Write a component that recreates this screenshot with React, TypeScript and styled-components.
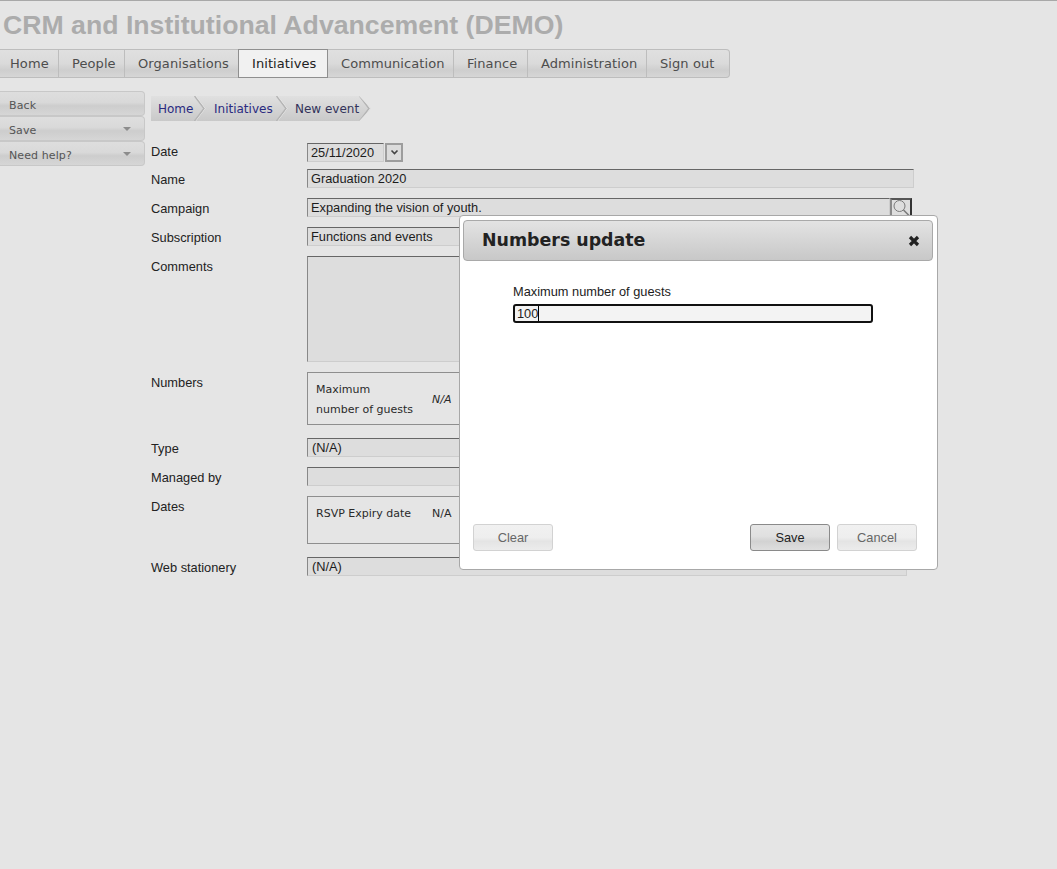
import React from 'react';
import styled, { createGlobalStyle } from 'styled-components';

const GlobalStyle = createGlobalStyle`
  html, body {
    margin: 0;
    padding: 0;
    background: #e5e5e5;
  }
  * {
    box-sizing: border-box;
  }
`;

const Page = styled.div`
  position: relative;
  min-height: 869px;
  border-top: 1px solid #a8a8a8;
  font-family: "Liberation Sans", Arial, sans-serif;
  overflow: hidden;
`;

const Title = styled.h1`
  margin: 0;
  height: 48px;
  padding: 9px 0 0 3px;
  font-size: 26.67px;
  line-height: 30px;
  font-weight: bold;
  color: #acacac;
`;

const NavBar = styled.nav`
  display: inline-flex;
  height: 29px;
  border: 1px solid #bdbdbd;
  border-left: none;
  border-radius: 0 4px 4px 0;
  background: linear-gradient(#e0e0e0 0%, #dadada 50%, #cecece 75%, #d6d6d6 100%);
  vertical-align: top;
`;

const NavItem = styled.a<{ $width: number; $pad?: number; $active?: boolean }>`
  display: flex;
  align-items: center;
  width: ${({ $width }) => $width}px;
  padding-left: ${({ $pad }) => $pad ?? 13}px;
  font-family: "DejaVu Sans", Verdana, sans-serif;
  font-size: 13px;
  letter-spacing: 0.08px;
  color: ${({ $active }) => ($active ? '#222' : '#4d4d4d')};
  border-right: 1px solid #bdbdbd;
  ${({ $active }) => $active && `
    background: #f1f1f1;
    border: 1px solid #8f8f8f;
    margin: -1px 0 -1px -1px;
    height: 29px;
  `}
  &:last-child {
    border-right: none;
  }
`;

const Content = styled.div`
  display: flex;
  margin-top: 13px;
`;

const Sidebar = styled.aside`
  display: flex;
  flex-direction: column;
  width: 145px;
  flex: none;
`;

const SideButton = styled.div`
  display: flex;
  align-items: center;
  justify-content: space-between;
  height: 25px;
  padding: 3px 13px 0 9px;
  border: 1px solid #c8c8c8;
  border-left: none;
  border-radius: 0 4px 4px 0;
  background: linear-gradient(#dedede 0%, #d9d9d9 45%, #cdcdcd 60%, #d6d6d6 100%);
  font-family: "DejaVu Sans", Verdana, sans-serif;
  font-size: 11px;
  color: #555;
  letter-spacing: 0.1px;
`;

const Caret = styled.span`
  width: 0;
  height: 0;
  margin-top: -3px;
  border-left: 4px solid transparent;
  border-right: 4px solid transparent;
  border-top: 4px solid #8c8c8c;
`;

const Main = styled.main`
  padding: 5px 0 0 6px;
  flex: 1;
`;

const Crumbs = styled.div`
  display: flex;
  width: 220px;
  height: 25px;
  margin-bottom: 22px;
  background: linear-gradient(#e0e0e0, #c9c9c9);
  clip-path: polygon(0 0, calc(100% - 12px) 0, 100% 50%, calc(100% - 12px) 100%, 0 100%);
`;

const Crumb = styled.a<{ $width: number; $pad: number; $current?: boolean }>`
  position: relative;
  display: flex;
  align-items: center;
  width: ${({ $width }) => $width}px;
  padding-left: ${({ $pad }) => $pad}px;
  font-family: "DejaVu Sans", Verdana, sans-serif;
  font-size: 12px;
  color: ${({ $current }) => ($current ? '#33335a' : '#2a2a80')};
`;

const CrumbEdge = styled.svg`
  position: absolute;
  top: 0;
  right: 0;
  width: 12px;
  height: 25px;
`;

const Row = styled.div<{ $gap?: number }>`
  display: flex;
  margin-top: ${({ $gap }) => $gap ?? 10}px;
`;

const Label = styled.label<{ $offset?: number }>`
  flex: none;
  width: 156px;
  padding-top: ${({ $offset }) => $offset ?? 3}px;
  font-size: 12.8px;
  line-height: 15px;
  color: #222;
`;

const Field = styled.div<{ $width: number; $height?: number; $pad?: number }>`
  width: ${({ $width }) => $width}px;
  height: ${({ $height }) => $height ?? 19}px;
  padding: 0 ${({ $pad }) => $pad ?? 3}px;
  background: #dddddd;
  border-top: 1px solid #666;
  border-left: 1px solid #888;
  border-bottom: 1px solid #cdcdcd;
  border-right: 1px solid #cdcdcd;
  font-size: 12.8px;
  line-height: 17px;
  color: #1c1c1c;
  white-space: nowrap;
`;

const DropButton = styled.div`
  display: flex;
  align-items: center;
  justify-content: center;
  width: 18px;
  height: 19px;
  margin-left: 1px;
  background: #dcdcdc;
  border: 2px solid #9d9d9d;
`;

const SearchButton = styled.div`
  display: flex;
  align-items: flex-start;
  justify-content: center;
  width: 22px;
  height: 19px;
  background: #dedede;
  border-top: 2px solid #555;
  border-left: 2px solid #8a8a8a;
  border-right: 2px solid #333;
`;

const InfoBox = styled.div<{ $height: number }>`
  display: flex;
  width: 599px;
  height: ${({ $height }) => $height}px;
  padding: 7px 8px;
  border: 1px solid #8e8e8e;
  font-family: "DejaVu Sans", Verdana, sans-serif;
  font-size: 11px;
  line-height: 20px;
  color: #2a2a2a;
`;

const InfoName = styled.div`
  width: 116px;
`;

const InfoValue = styled.div<{ $italic?: boolean; $top?: number }>`
  font-style: ${({ $italic }) => ($italic ? 'italic' : 'normal')};
  margin-top: ${({ $top }) => $top ?? 0}px;
`;

const Dialog = styled.section`
  position: absolute;
  left: 459px;
  top: 214px;
  display: flex;
  flex-direction: column;
  width: 479px;
  height: 355px;
  padding: 4px 4px 4px 3px;
  background: #fff;
  border: 1px solid #a8a8a8;
  border-radius: 4px;
`;

const DialogHeader = styled.header`
  display: flex;
  align-items: center;
  justify-content: space-between;
  height: 41px;
  padding: 0 12px 0 18px;
  background: linear-gradient(#e3e3e3, #c8c8c8);
  border: 1px solid #a9a9a9;
  border-radius: 4px;
`;

const DialogTitle = styled.h2`
  margin: 0 0 1px;
  font-family: "DejaVu Sans", Verdana, sans-serif;
  font-size: 17.4px;
  font-weight: bold;
  color: #222;
`;

const DialogBody = styled.div`
  flex: 1;
  padding: 23px 0 0 50px;
`;

const DialogLabel = styled.div`
  font-size: 12.8px;
  line-height: 16px;
  color: #1c1c1c;
  margin-bottom: 4px;
`;

const FocusedInput = styled.div`
  width: 360px;
  height: 19px;
  padding: 0 2px;
  background: #f3f3f3;
  border: 2px solid #111;
  border-radius: 3px;
  font-size: 12.8px;
  line-height: 15px;
  color: #222;
`;

const TextCaret = styled.span`
  border-right: 1px solid #000;
`;

const DialogFooter = styled.footer`
  display: flex;
  justify-content: space-between;
  padding: 0 16px 14px 10px;
`;

const FooterGroup = styled.div`
  display: flex;
  gap: 7px;
`;

const DialogButton = styled.button<{ $primary?: boolean }>`
  width: 80px;
  height: 27px;
  padding: 0;
  border-radius: 3px;
  border: 1px solid ${({ $primary }) => ($primary ? '#8a8a8a' : '#d2d2d2')};
  background: ${({ $primary }) => ($primary
    ? 'linear-gradient(#e6e6e6 0%, #e0e0e0 45%, #d2d2d2 65%, #dedede 100%)'
    : 'linear-gradient(#f1f1f1 0%, #eeeeee 50%, #e4e4e4 65%, #ececec 100%)')};
  font-family: "Liberation Sans", Arial, sans-serif;
  font-size: 12.8px;
  color: ${({ $primary }) => ($primary ? '#222' : '#666')};
`;

const crumbs = [
  { text: 'Home', width: 55, pad: 7 },
  { text: 'Initiatives', width: 82, pad: 8 },
  { text: 'New event', width: 83, pad: 7, current: true },
];

const navItems = [
  { text: 'Home', width: 59, pad: 10 },
  { text: 'People', width: 66 },
  { text: 'Organisations', width: 114 },
  { text: 'Initiatives', width: 90, active: true },
  { text: 'Communication', width: 126 },
  { text: 'Finance', width: 74 },
  { text: 'Administration', width: 119 },
  { text: 'Sign out', width: 82 },
];

export default function App() {
  return (
    <Page>
      <GlobalStyle />
      <Title>CRM and Institutional Advancement (DEMO)</Title>
      <NavBar>
        {navItems.map(item => (
          <NavItem key={item.text} $width={item.width} $pad={item.pad} $active={item.active}>{item.text}</NavItem>
        ))}
      </NavBar>
      <Content>
        <Sidebar>
          <SideButton>Back</SideButton>
          <SideButton>Save<Caret /></SideButton>
          <SideButton>Need help?<Caret /></SideButton>
        </Sidebar>
        <Main>
          <Crumbs>
            {crumbs.map(c => (
              <Crumb key={c.text} $width={c.width} $pad={c.pad} $current={c.current}>
                {c.text}
                <CrumbEdge viewBox="0 0 12 25">
                  <path d="M1.5 0 L11 12.5 L1.5 25" fill="none" stroke="#ececec" strokeWidth="1" />
                  <path d="M0.5 0 L10 12.5 L0.5 25" fill="none" stroke="#b4b4b4" strokeWidth="1.4" />
                </CrumbEdge>
              </Crumb>
            ))}
          </Crumbs>
          <Row $gap={0}>
            <Label $offset={1}>Date</Label>
            <Field $width={77}>25/11/2020</Field>
            <DropButton>
              <svg width="9" height="7" viewBox="0 0 9 7">
                <path d="M1.5 1.5 L4.5 4.5 L7.5 1.5" fill="none" stroke="#444" strokeWidth="1.6" />
              </svg>
            </DropButton>
          </Row>
          <Row $gap={7}>
            <Label>Name</Label>
            <Field $width={607}>Graduation 2020</Field>
          </Row>
          <Row>
            <Label>Campaign</Label>
            <Field $width={583}>Expanding the vision of youth.</Field>
            <SearchButton>
              <svg width="18" height="17" viewBox="0 0 18 17">
                <circle cx="7.5" cy="6" r="5.5" fill="none" stroke="#7a7a7a" strokeWidth="1" />
                <path d="M11.5 10 L17 15.5" stroke="#7a7a7a" strokeWidth="1.6" />
              </svg>
            </SearchButton>
          </Row>
          <Row>
            <Label>Subscription</Label>
            <Field $width={599}>Functions and events</Field>
          </Row>
          <Row>
            <Label>Comments</Label>
            <Field $width={599} $height={106} />
          </Row>
          <Row>
            <Label>Numbers</Label>
            <InfoBox $height={53}>
              <InfoName>Maximum<br />number of guests</InfoName>
              <InfoValue $italic $top={10}>N/A</InfoValue>
            </InfoBox>
          </Row>
          <Row $gap={13}>
            <Label>Type</Label>
            <Field $width={599} $pad={4}>(N/A)</Field>
          </Row>
          <Row>
            <Label>Managed by</Label>
            <Field $width={599} />
          </Row>
          <Row>
            <Label>Dates</Label>
            <InfoBox $height={48}>
              <InfoName>RSVP Expiry date</InfoName>
              <InfoValue>N/A</InfoValue>
            </InfoBox>
          </Row>
          <Row $gap={13}>
            <Label>Web stationery</Label>
            <Field $width={600} $pad={4}>(N/A)</Field>
          </Row>
        </Main>
      </Content>
      <Dialog>
        <DialogHeader>
          <DialogTitle>Numbers update</DialogTitle>
          <svg width="12" height="12" viewBox="0 0 12 12">
            <path d="M2 2 L10 10 M10 2 L2 10" stroke="#222" strokeWidth="3.2" />
          </svg>
        </DialogHeader>
        <DialogBody>
          <DialogLabel>Maximum number of guests</DialogLabel>
          <FocusedInput><TextCaret>100</TextCaret></FocusedInput>
        </DialogBody>
        <DialogFooter>
          <DialogButton>Clear</DialogButton>
          <FooterGroup>
            <DialogButton $primary>Save</DialogButton>
            <DialogButton>Cancel</DialogButton>
          </FooterGroup>
        </DialogFooter>
      </Dialog>
    </Page>
  );
}
